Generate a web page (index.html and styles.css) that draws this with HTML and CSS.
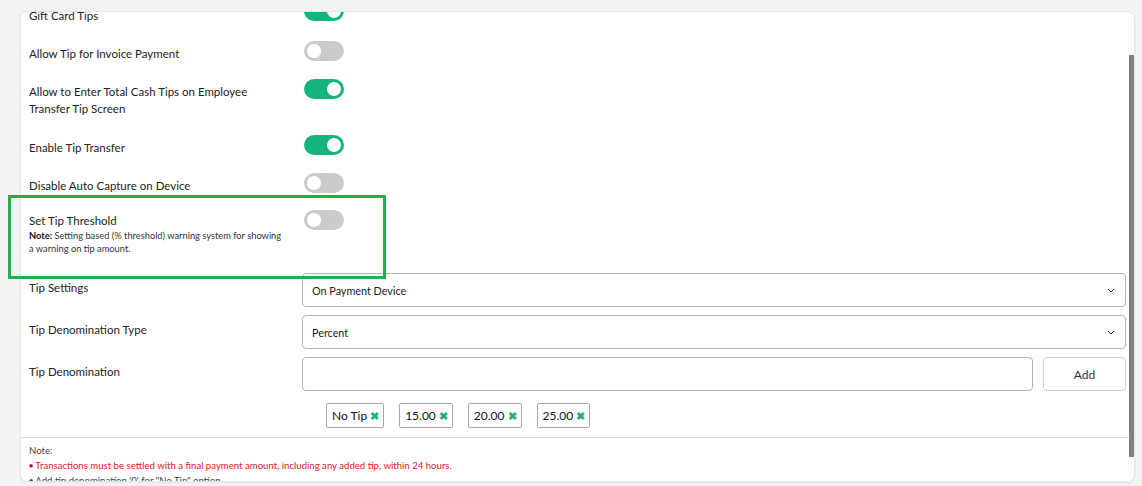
FILE: index.html
```html
<!DOCTYPE html>
<html lang="en">
  <head>
    <meta charset="UTF-8" />
    <title>Tip Settings</title>
    <link rel="stylesheet" href="styles.css">
  </head>
  <body>
    <div class="card">
      <div class="card-body">
        <div class="row first">
          <label>Gift Card Tips</label>
          <div class="control"><span class="toggle on"></span></div>
        </div>
        <div class="row">
          <label>Allow Tip for Invoice Payment</label>
          <div class="control"><span class="toggle"></span></div>
        </div>
        <div class="row wide">
          <label>Allow to Enter Total Cash Tips on Employee Transfer Tip Screen</label>
          <div class="control"><span class="toggle on"></span></div>
        </div>
        <div class="row">
          <label>Enable Tip Transfer</label>
          <div class="control"><span class="toggle on"></span></div>
        </div>
        <div class="row tight">
          <label>Disable Auto Capture on Device</label>
          <div class="control"><span class="toggle"></span></div>
        </div>
        <div class="row wide">
          <div class="label-block">
            <label>Set Tip Threshold</label>
            <p class="hint"><b>Note:</b> Setting based (% threshold) warning system for showing a warning on tip amount.</p>
          </div>
          <div class="control"><span class="toggle"></span></div>
        </div>

        <div class="row field">
          <label>Tip Settings</label>
          <div class="select">
            <span>On Payment Device</span>
            <svg width="8" height="5" viewBox="0 0 8 5"><polyline points="1,1 4,4 7,1" fill="none" stroke="#333" stroke-width="1"/></svg>
          </div>
        </div>
        <div class="row field">
          <label>Tip Denomination Type</label>
          <div class="select">
            <span>Percent</span>
            <svg width="8" height="5" viewBox="0 0 8 5"><polyline points="1,1 4,4 7,1" fill="none" stroke="#333" stroke-width="1"/></svg>
          </div>
        </div>
        <div class="row field last">
          <label>Tip Denomination</label>
          <div class="control">
            <div class="add-line">
              <div class="input"></div>
              <button class="add-btn">Add</button>
            </div>
            <div class="chips">
              <span class="chip">No Tip <i>&#10006;</i></span>
              <span class="chip">15.00 <i>&#10006;</i></span>
              <span class="chip">20.00 <i>&#10006;</i></span>
              <span class="chip">25.00 <i>&#10006;</i></span>
            </div>
          </div>
        </div>
      </div>

      <div class="card-footer">
        <p>Note:</p>
        <p class="warn"><span class="dot">&#9679;</span> Transactions must be settled with a final payment amount, including any added tip, within 24 hours.</p>
        <p><span class="dot">&#9679;</span> Add tip denomination '0' for "No Tip" option.</p>
      </div>

      <div class="scroll-thumb"></div>
    </div>

    <!-- highlight around the threshold setting -->
    <div class="highlight"></div>
  </body>
</html>
```

FILE: styles.css
```css
* {
  margin: 0;
  padding: 0;
  box-sizing: border-box;
}

body {
  font-family: Lato, "Open Sans", sans-serif;
  background-color: #f2f3f5;
  color: #222;
  width: 1142px;
  height: 486px;
  overflow: hidden;
  padding: 11px 7px 4px 20px;
  position: relative;
}

.card {
  position: relative;
  height: 471px;
  background-color: #fff;
  border: 1px solid #e3e5e8;
  border-radius: 7px;
  overflow: hidden;
  box-shadow: 0 1px 2px rgba(0, 0, 0, 0.05);
}

/* page is scrolled a little: first row is cut by the card top */
.card-body {
  margin-top: -11px;
  padding: 0 8px 9px 8px;
}

.scroll-thumb {
  position: absolute;
  right: 0;
  top: 43px;
  width: 5px;
  height: 402px;
  background-color: #808080;
}

.row {
  display: grid;
  grid-template-columns: 273px 1fr;
  padding-bottom: 17px;
}

.row.first {
  padding-bottom: 17px;
}

.row.first label {
  padding-top: 6px;
}

.row.wide {
  padding-bottom: 18px;
}

.row.tight {
  padding-bottom: 16px;
}

.row label {
  display: block;
  font-size: 11.5px;
  line-height: 17px;
  padding-top: 4px;
  padding-right: 30px;
  color: #222;
}

.control {
  min-width: 0;
}

.toggle {
  display: block;
  position: relative;
  width: 40px;
  height: 20px;
  margin-left: 2px;
  border-radius: 10px;
  background-color: #cbcbcb;
}

.toggle::after {
  content: "";
  position: absolute;
  top: 3px;
  left: 3px;
  width: 14px;
  height: 14px;
  border-radius: 50%;
  background-color: #fff;
}

.toggle.on {
  background-color: #14b47c;
}

.toggle.on::after {
  left: 23px;
}

.label-block label {
  padding-top: 2px;
}

.hint {
  font-size: 9.3px;
  line-height: 13px;
  color: #333;
  padding-right: 18px;
}

.hint b {
  color: #111;
}

.row.field {
  padding-bottom: 8px;
}

.row.field label {
  padding-top: 6px;
}

.row.last {
  padding-bottom: 0;
}

.select,
.input {
  height: 34px;
  border: 1px solid #b4b4b4;
  border-radius: 4px;
  background-color: #fff;
}

.select {
  display: flex;
  align-items: center;
  justify-content: space-between;
  padding: 0 10px 0 9px;
  font-size: 10.8px;
  color: #222;
}

.add-line {
  display: flex;
  gap: 10px;
}

.input {
  flex: 1;
}

.add-btn {
  width: 83px;
  height: 34px;
  background-color: #fff;
  border: 1px solid #cfcfcf;
  border-radius: 4px;
  font-family: inherit;
  font-size: 12px;
  color: #333;
}

.chips {
  display: flex;
  gap: 15px;
  margin-top: 12px;
  padding-left: 24px;
}

.chip {
  display: flex;
  align-items: center;
  gap: 3px;
  height: 25px;
  padding: 0 4px 0 5px;
  border: 1px solid #a9a9a9;
  border-radius: 2px;
  font-size: 12px;
  color: #111;
}

.chip i {
  font-style: normal;
  font-size: 10.5px;
  font-weight: 700;
  color: #22b07a;
}

.card-footer {
  border-top: 1px solid #dedede;
  padding: 6px 8px 26px;
  font-size: 9.6px;
  line-height: 14px;
  color: #444;
}

.card-footer .warn {
  color: #e0162b;
}

.card-footer .dot {
  font-size: 7px;
  vertical-align: 1px;
}

.warn .dot {
  color: #c0001a;
}

.highlight {
  position: absolute;
  left: 8px;
  top: 195px;
  width: 378px;
  height: 84px;
  border: 3px solid #22b04a;
  pointer-events: none;
}
```
